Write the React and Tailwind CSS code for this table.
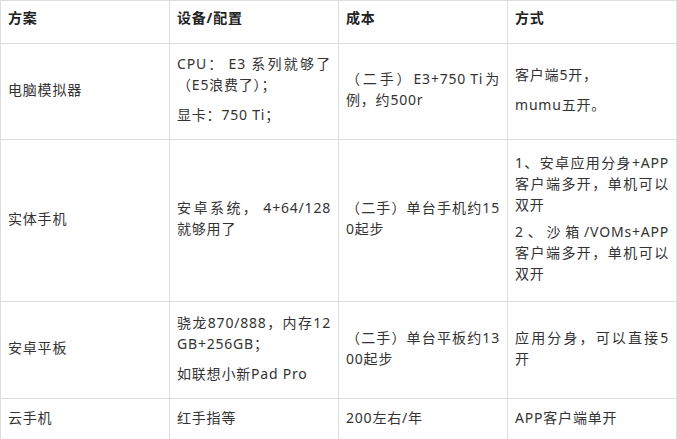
import React from "react";

const J = ({ children }) => (
  <div className="whitespace-nowrap leading-[21px] text-justify [text-align-last:justify]">{children}</div>
);
const L = ({ children }) => (
  <div className="whitespace-nowrap leading-[21px]">{children}</div>
);
const S = () => <span className="inline-block w-[4px]" />;

const Cell = ({ children, head, extra = "" }) => (
  <div
    className={
      "bg-white flex flex-col justify-center px-[7px] " +
      (head ? "pb-[9px] font-bold text-[#222] " : "pb-[5px] ") +
      extra
    }
  >
    {children}
  </div>
);

export default function App() {
  return (
    <div
      className="w-[677px] h-[439px] overflow-hidden bg-white text-[14px] text-[#333] tracking-[0.8px]"
      style={{ fontFamily: '"Noto Sans", "Noto Sans CJK SC", sans-serif' }}
    >
      <div className="grid grid-cols-[168px_168px_168px_168px] grid-rows-[42px_95px_161px_96px_42px] gap-px bg-[#dedede] p-px w-[677px]">
        <Cell head><L>方案</L></Cell>
        <Cell head><L>设备/配置</L></Cell>
        <Cell head><L>成本</L></Cell>
        <Cell head><L>方式</L></Cell>

        <Cell><L>电脑模拟器</L></Cell>
        <Cell>
          <J>CPU：<S />E3<S />系列就够了</J>
          <L>（E5浪费了）；</L>
          <div className="h-[9px]" />
          <L>显卡：750 Ti；</L>
        </Cell>
        <Cell>
          <J>（二手）E3+750<S />Ti为</J>
          <L>例，约500r</L>
        </Cell>
        <Cell>
          <L>客户端5开，</L>
          <div className="h-[9px]" />
          <L>mumu五开。</L>
        </Cell>

        <Cell><L>实体手机</L></Cell>
        <Cell>
          <J>安卓系统，<S />4+64/128</J>
          <L>就够用了</L>
        </Cell>
        <Cell>
          <J>（二手）单台手机约15</J>
          <L>0起步</L>
        </Cell>
        <Cell>
          <J>1、安卓应用分身+APP</J>
          <J>客户端多开，单机可以</J>
          <L>双开</L>
          <div className="h-[6px]" />
          <J>2、沙箱/VOMs+APP</J>
          <J>客户端多开，单机可以</J>
          <L>双开</L>
        </Cell>

        <Cell><L>安卓平板</L></Cell>
        <Cell>
          <J>骁龙870/888，内存12</J>
          <L>GB+256GB；</L>
          <div className="h-[9px]" />
          <L>如联想小新Pad Pro</L>
        </Cell>
        <Cell>
          <J>（二手）单台平板约13</J>
          <L>00起步</L>
        </Cell>
        <Cell>
          <J>应用分身，可以直接5</J>
          <L>开</L>
        </Cell>

        <Cell><L>云手机</L></Cell>
        <Cell><L>红手指等</L></Cell>
        <Cell><L>200左右/年</L></Cell>
        <Cell><L>APP客户端单开</L></Cell>
      </div>
    </div>
  );
}
